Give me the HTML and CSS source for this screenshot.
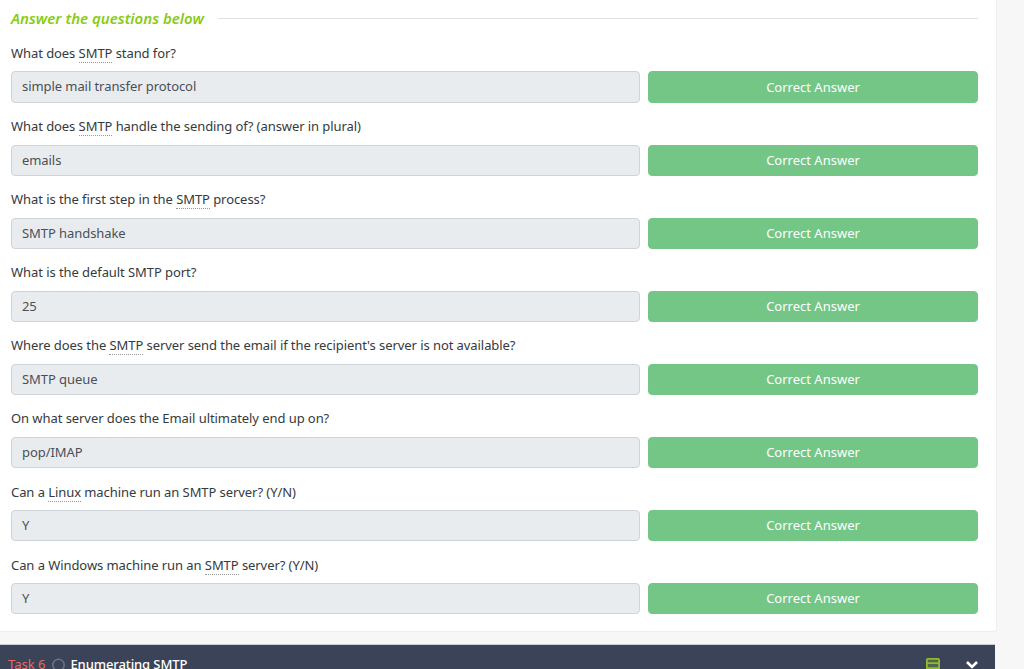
FILE: index.html
```html
<!DOCTYPE html>
<html lang="en">
<head>
<meta charset="utf-8">
<title>Answer the questions below</title>
<link rel="stylesheet" href="styles.css">
</head>
<body>
<main class="card">
  <div class="heading"><h5>Answer the questions below</h5><span class="rule"></span></div>
  <section class="q"><p class="label">What does <abbr>SMTP</abbr> stand for?</p><div class="row"><div class="answer">simple mail transfer protocol</div><button class="ok">Correct Answer</button></div></section>
  <section class="q"><p class="label">What does <abbr>SMTP</abbr> handle the sending of? (answer in plural)</p><div class="row"><div class="answer">emails</div><button class="ok">Correct Answer</button></div></section>
  <section class="q"><p class="label">What is the first step in the <abbr>SMTP</abbr> process?</p><div class="row"><div class="answer">SMTP handshake</div><button class="ok">Correct Answer</button></div></section>
  <section class="q"><p class="label">What is the default SMTP port?</p><div class="row"><div class="answer">25</div><button class="ok">Correct Answer</button></div></section>
  <section class="q"><p class="label">Where does the <abbr>SMTP</abbr> server send the email if the recipient's server is not available?</p><div class="row"><div class="answer">SMTP queue</div><button class="ok">Correct Answer</button></div></section>
  <section class="q"><p class="label">On what server does the Email ultimately end up on?</p><div class="row"><div class="answer">pop/IMAP</div><button class="ok">Correct Answer</button></div></section>
  <section class="q"><p class="label">Can a <abbr>Linux</abbr> machine run an SMTP server? (Y/N)</p><div class="row"><div class="answer">Y</div><button class="ok">Correct Answer</button></div></section>
  <section class="q"><p class="label">Can a Windows machine run an <abbr>SMTP</abbr> server? (Y/N)</p><div class="row"><div class="answer">Y</div><button class="ok">Correct Answer</button></div></section>
</main>
<header class="task">
  <span class="num">Task 6</span>
  <svg class="circle" width="14" height="14" viewBox="0 0 14 14"><circle cx="6.5" cy="7" r="5.7" fill="none" stroke="#6b7280" stroke-width="1.6"/></svg>
  <span class="title">Enumerating SMTP</span>
  <span class="spacer"></span>
  <svg class="srv" width="14" height="16" viewBox="0 0 14 16"><rect x="0.9" y="0.9" width="12.2" height="14.2" rx="1" fill="#8fbc2e" fill-opacity="0.3" stroke="#8fbc2e" stroke-width="1.8"/><path d="M1 5.2H13M1 10.2H13" stroke="#8fbc2e" stroke-width="1.8"/></svg>
  <svg class="chev" width="14" height="10" viewBox="0 0 14 10"><path d="M2 2L7 7L12 2" fill="none" stroke="#fff" stroke-width="2.6"/></svg>
</header>
</body>
</html>
```
FILE: styles.css
```css
* { box-sizing: border-box; }
html, body { margin: 0; height: 669px; overflow: hidden; }
body {
  background: #f7f7f7;
  font-family: "Noto Sans", "Open Sans", sans-serif;
  color: #343a40;
}
.card {
  width: 997px;
  height: 632px;
  background: #fff;
  border: 1px solid #eeeeee;
  border-width: 0 1px 1px 0;
  border-radius: 0 0 4px 0;
  padding: 9px 18px 0 11px;
}
.heading { display: flex; align-items: center; gap: 14px; height: 18px; }
.heading h5 { margin: 0; font-size: 15px; font-weight: 600; font-style: italic; color: #88cc14; white-space: nowrap; }
.rule { flex: 1; height: 1px; background: #e2e2e2; }
.q { height: 73.1px; }
.q:first-of-type { margin-top: 16px; }
.label { margin: 0; height: 28px; font-size: 13px; line-height: 20px; letter-spacing: -0.07px; }
abbr { border-bottom: 1px dotted #999; }
.row { display: flex; gap: 8px; margin-top: 0.45px; }
.answer {
  flex: 0 0 629px;
  height: 31.3px;
  padding: 0 10px;
  background: #e9ecef;
  border: 1px solid #ced4da;
  border-radius: 4px;
  font-size: 13px;
  line-height: 28.6px;
  letter-spacing: -0.07px;
  color: #495057;
}
.ok {
  flex: 1;
  height: 31.3px;
  padding: 0 0 0.7px;
  border: 1px solid #73c686;
  border-radius: 4px;
  background: #73c686;
  color: #fff;
  font: inherit;
  font-size: 13px;
}
.task {
  width: 995px;
  height: 25px;
  margin-top: 12px;
  background: #3a4358;
  border-top: 1px solid #c9ccd2;
  display: flex;
  align-items: flex-start;
  padding: 9px 16px 0 8px;
  font-size: 13px;
  overflow: hidden;
}
.num { color: #e96a5c; margin-right: 7px; line-height: 20px; }
.circle { margin: 4px 4px 0 0; flex: none; }
.title { color: #fff; font-weight: 500; line-height: 20px; letter-spacing: -0.1px; }
.spacer { flex: 1; }
.srv { margin: 4px 25px 0 0; flex: none; }
.chev { margin-top: 6px; flex: none; }
```
